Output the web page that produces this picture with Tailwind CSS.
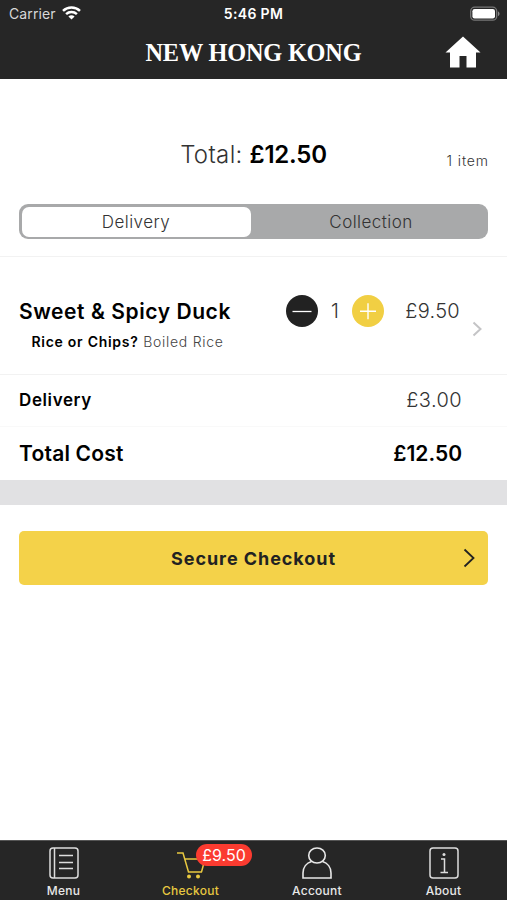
<!DOCTYPE html>
<html lang="en">
<head>
<meta charset="utf-8">
<meta name="viewport" content="width=device-width, initial-scale=1">
<title>Checkout</title>
<script src="https://cdn.jsdelivr.net/npm/@tailwindcss/browser@4"></script>
</head>
<body class="bg-white">
<div class="flex h-[900px] w-[507px] flex-col overflow-hidden whitespace-nowrap bg-white font-['Inter','Liberation_Sans',sans-serif] text-black">
  <header class="h-[79px] shrink-0 bg-[#262626] text-white">
    <div class="grid h-7 grid-cols-3 items-center pl-[9px] pr-[7px]">
      <div class="-mt-[2px] flex items-center gap-[6px] text-[14px] text-[#d8d8d8]">
        <span class="tracking-[0.1px]">Carrier</span>
        <svg class="-mt-[1px] h-[14px] w-[19px]" viewBox="0 0 19 14" fill="none" stroke="#fff" stroke-width="2.5"><path d="M1 4.8C5.8.4 13.2.4 18 4.8"/><path d="M4.1 8.1c3-2.8 7.8-2.8 10.8 0"/><path d="M9.5 13.6 6.4 10.5c1.7-1.6 4.5-1.6 6.2 0z" fill="#fff" stroke="none"/></svg>
      </div>
      <div class="-mt-[2px] -ml-[2px] text-center text-[14px] font-semibold tracking-[0.35px]">5:46 PM</div>
      <svg class="-mt-[1px] h-[16px] w-[30px] justify-self-end" viewBox="0 0 30 16"><rect x=".7" y="1.2" width="26" height="13" rx="4" fill="none" stroke="#777" stroke-width="1.3"/><rect x="2.4" y="3" width="22.6" height="9.4" rx="2.2" fill="#fff"/><path d="M28 5.5c2 .7 2 3.8 0 4.5z" fill="#888"/></svg>
    </div>
    <div class="grid h-12 grid-cols-[1fr_auto_1fr] items-center">
      <span></span>
      <h1 class="origin-center scale-x-[.935] pt-[1px] font-['Liberation_Serif',serif] text-[26px] font-bold leading-none tracking-[-0.2px]">NEW HONG KONG</h1>
      <svg class="mr-[26px] h-[32px] w-[36px] justify-self-end" viewBox="0 0 36 32"><path d="M18 .5 35.5 16.500H31V31.500H21.500V20H14.500V31.500H5V16.500H.500z" fill="#fff"/></svg>
    </div>
  </header>

  <main class="flex-1">
    <div class="h-[178px] border-b border-[#f2f2f2] px-[19px] pt-[58px]">
      <div class="grid h-9 grid-cols-[1fr_auto_1fr] items-center">
        <span></span>
        <div class="text-[24px]"><span class="font-light tracking-[0.35px] text-[#333]">Total:</span> <b class="font-semibold tracking-[-0.2px]">£12.50</b></div>
        <span class="pt-[11px] text-right text-[14px] font-light tracking-[0.9px] text-[#333] -mr-[1px]">1 item</span>
      </div>
      <div class="mt-[31px] grid h-[35px] grid-cols-[229px_1fr] rounded-[9px] bg-[#a8a9aa] p-[2.500px] text-center text-[17px] font-light leading-[30px] tracking-[0.45px] text-[#333]">
        <div class="rounded-[7px] bg-white">Delivery</div>
        <div class="pl-[6px]">Collection</div>
      </div>
    </div>

    <section class="flex h-[118px] justify-between border-b border-[#f2f2f2] pl-[19px] pr-[24px] pt-[38px]">
      <div>
        <h2 class="pt-[1px] text-[21px] font-semibold leading-[32px] tracking-[0.57px]">Sweet &amp; Spicy Duck</h2>
        <p class="pl-[12.500px] text-[14px] leading-[28px] tracking-[0.72px]"><b class="font-semibold">Rice or Chips?</b> <span class="font-light text-[#444]">Boiled Rice</span></p>
      </div>
      <div class="flex">
        <svg class="size-8" viewBox="0 0 32 32"><circle cx="16" cy="16" r="16" fill="#222"/><path d="M6.500 16.500h19" stroke="#fff" stroke-width="1.300"/></svg>
        <span class="w-[34px] text-center text-[20px] font-light leading-[33px] text-[#333]">1</span>
        <svg class="size-8" viewBox="0 0 32 32"><circle cx="16" cy="16" r="16" fill="#f1cf43"/><path d="M8 16.300h16M16 8.300v16" stroke="#fff" stroke-width="1.400"/></svg>
        <span class="w-[76px] text-right text-[20px] font-light leading-[33px] tracking-[0.3px] text-[#333]">£9.50</span>
        <svg class="ml-3 mt-[26px] h-4 w-[11px]" viewBox="0 0 11 16" fill="none" stroke="#c4c4c6" stroke-width="2"><path d="m1.500 1.500 7 6.500-7 6.500"/></svg>
      </div>
    </section>
    <div class="flex h-[52px] items-center justify-between border-b border-[#f9f9f9] pl-[19px] pr-[45px]">
      <b class="text-[17px] font-semibold tracking-[0.6px]">Delivery</b><span class="-mt-[2px] text-[20px] font-light tracking-[0.4px] text-[#333]">£3.00</span>
    </div>
    <div class="flex h-[53px] items-center justify-between pl-[19px] pr-[45px] text-[21px] font-semibold">
      <b class="font-semibold tracking-[0.2px]">Total Cost</b><b class="font-semibold">£12.50</b>
    </div>
    <div class="h-[25px] bg-[#e1e1e3]"></div>
    <button class="mx-[19px] mt-[26px] grid h-[54px] w-[469px] grid-cols-[1fr_auto_1fr] items-center rounded-[5px] bg-[#f4d249] px-[13px] text-[18px] font-bold text-[#222]">
      <span></span><span class="pt-[1px] tracking-[0.93px]">Secure Checkout</span>
      <svg class="h-5 w-3 justify-self-end" viewBox="0 0 12 20" fill="none" stroke="#222" stroke-width="1.800"><path d="m1.500 1.500 9 8.500-9 8.500"/></svg>
    </button>
  </main>

  <nav class="grid h-[60px] shrink-0 grid-cols-[127px_127px_126px_127px] border-t border-[#555] bg-[#262626] text-center text-[12px] font-medium tracking-[0.25px] text-[#e8e8e8]">
    <a class="flex flex-col items-center pt-[6px]">
      <svg class="h-8 w-[30px]" viewBox="0 0 30 32" fill="none" stroke="#ddd" stroke-width="1.500"><rect x="1" y="1" width="28" height="30" rx="3"/><path d="M5.500 1v30M10 8.500h14M10 15.500h14M10 21.500h14"/></svg>
      <span class="mt-[4px] leading-4">Menu</span>
    </a>
    <a class="relative flex flex-col items-center pt-[6px] text-[#e8c840]">
      <svg class="h-8 w-[30px]" viewBox="0 0 30 32" fill="none" stroke="#e8c840" stroke-width="1.500"><path d="M1 6h6l5.500 19H26M8.800 12H29l-3.500 13"/><circle cx="13" cy="29.500" r="2" fill="#e8c840" stroke="none"/><circle cx="22" cy="29.500" r="2" fill="#e8c840" stroke="none"/></svg>
      <span class="mt-[4px] leading-4">Checkout</span>
      <span class="absolute left-[69px] top-[3px] h-[22px] w-[56px] rounded-full bg-[#fb3b30] text-[16px] font-normal leading-[22px] tracking-normal text-white">£9.50</span>
    </a>
    <a class="flex flex-col items-center pt-[6px]">
      <svg class="h-8 w-[30px]" viewBox="0 0 30 32" fill="none" stroke="#e8e8e8" stroke-width="1.600"><ellipse cx="15" cy="8.500" rx="8.300" ry="7.500"/><path d="M9.500 14.500C4.500 16 1 20.500 1 26v5h28v-5c0-5.500-3.500-10-8.500-11.500"/></svg>
      <span class="mt-[4px] leading-4">Account</span>
    </a>
    <a class="flex flex-col items-center pt-[6px]">
      <svg class="h-8 w-[30px]" viewBox="0 0 30 32" fill="none" stroke="#ddd" stroke-width="1.500"><rect x="1" y="1" width="28" height="30" rx="3"/><path d="M12 12h3.500v13M11.500 25.500h7.500"/><circle cx="15" cy="7.500" r="1.500" fill="#ddd" stroke="none"/></svg>
      <span class="mt-[4px] leading-4">About</span>
    </a>
  </nav>
</div>
</body>
</html>
